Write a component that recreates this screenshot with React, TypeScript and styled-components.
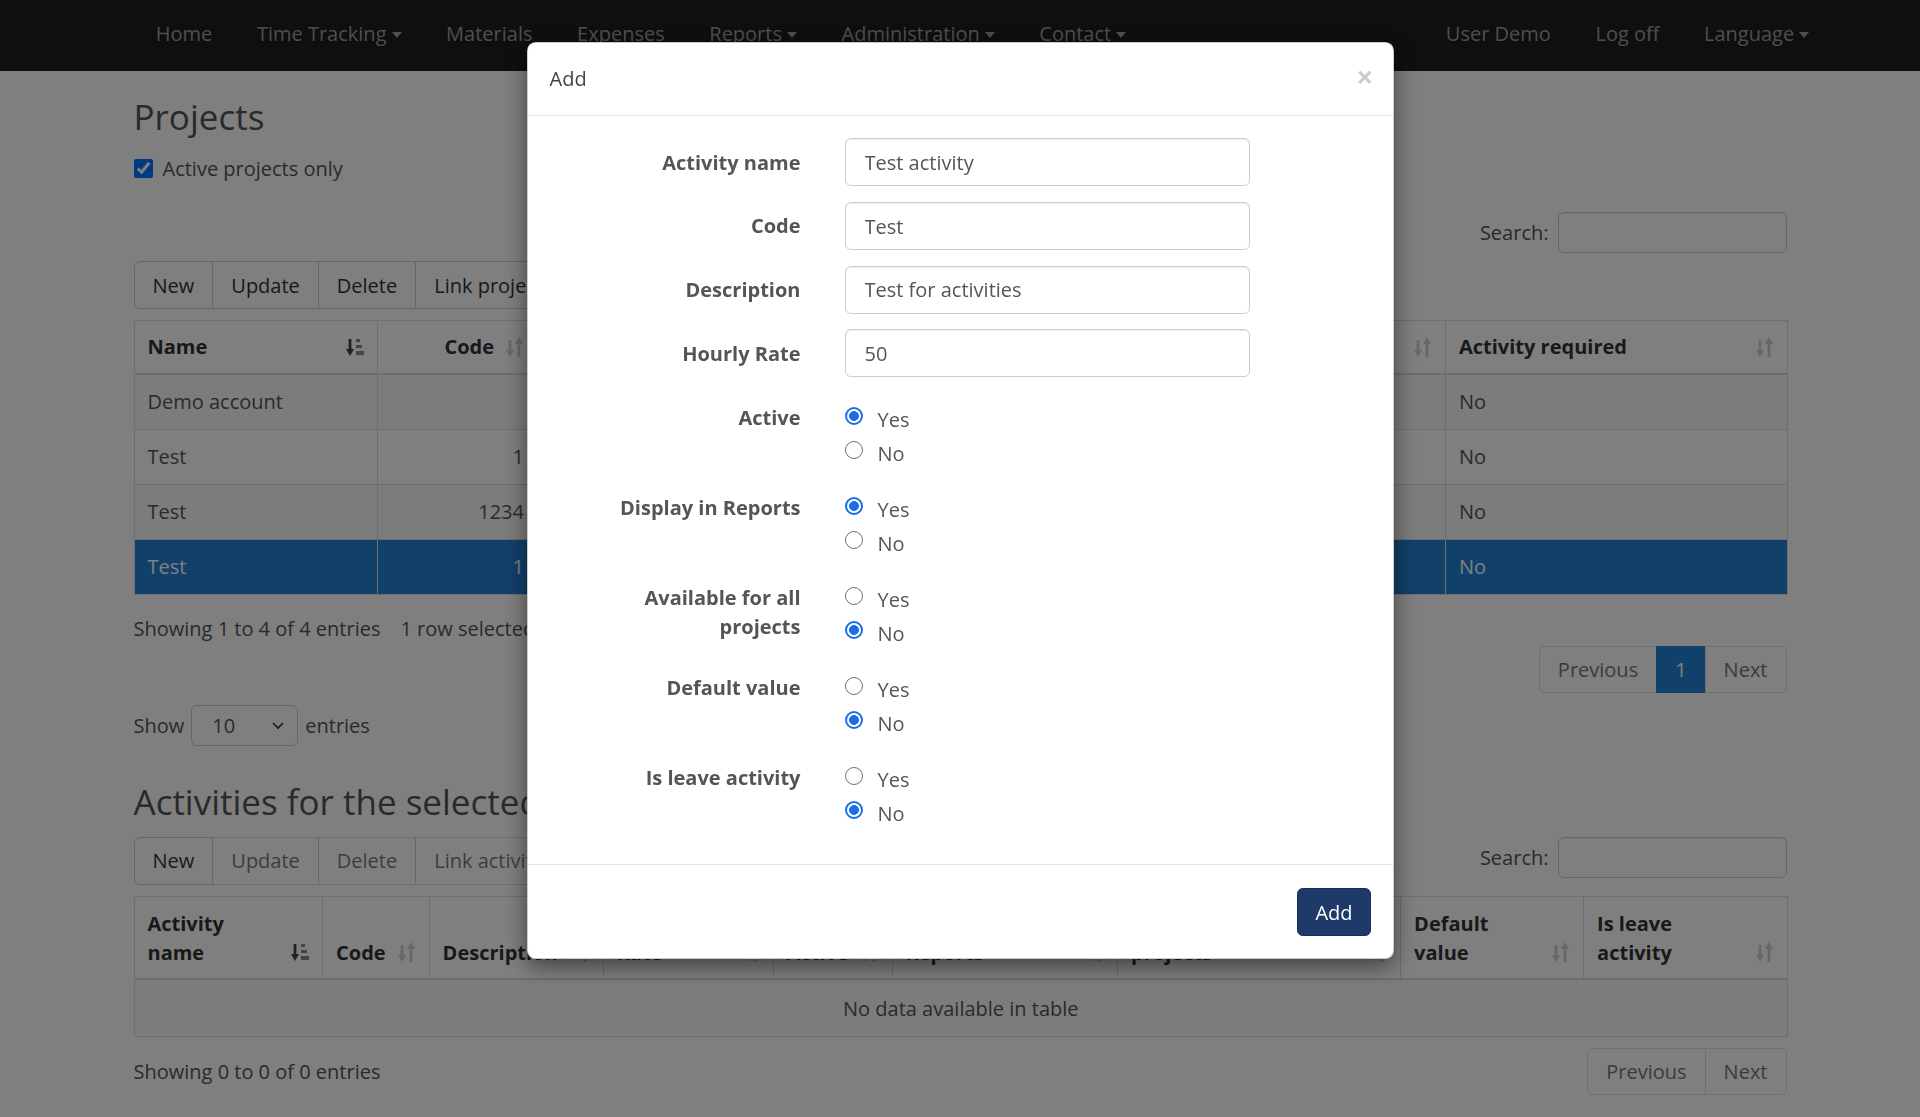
import React from 'react';
import styled, { createGlobalStyle } from 'styled-components';

// page behind the dialog is drawn in its normal colours, the backdrop dims it

const GlobalStyle = createGlobalStyle`
  * { box-sizing: border-box; }
  html, body { margin: 0; padding: 0; }
  body {
    height: 1117px;
    overflow: hidden;
    font-family: "Open Sans", "Liberation Sans", sans-serif;
    font-size: 20px;
    line-height: 29px;
    color: #555;
    background: #fff;
  }
`;

const Navbar = styled.nav`
  height: 71px;
  background: #1e1e1e;
`;

const NavInner = styled.div`
  width: 1653px;
  height: 100%;
  margin: 0 auto;
  display: flex;
  justify-content: space-between;
`;

const NavList = styled.ul<{ $right?: boolean }>`
  display: flex;
  margin: 0 ${({ $right }) => ($right ? '-45px' : '0')} 0 0;
  padding: 0;
  list-style: none;
`;

const NavItem = styled.li`
  display: flex;
  align-items: center;
  padding: 0 22.3px 5px;
  color: #9d9d9d;
  font-size: 20px;
  white-space: nowrap;
`;

const Caret = styled.span`
  display: inline-block;
  width: 0;
  height: 0;
  margin-left: 5px;
  margin-top: 3px;
  border-top: 6px solid #9d9d9d;
  border-left: 5px solid transparent;
  border-right: 5px solid transparent;
`;

const Content = styled.main`
  width: 1653px;
  margin: 0 auto;
`;

const Heading = styled.h3<{ $top: number }>`
  margin: ${({ $top }) => $top}px 0 0;
  font-size: 35px;
  line-height: 38.5px;
  font-weight: 500;
  color: #555;
`;

const CheckRow = styled.label`
  display: flex;
  align-items: center;
  gap: 10px;
  margin-top: 17px;
  height: 29px;
`;

const CheckBox = styled.input`
  width: 19px;
  height: 19px;
  margin: 0;
`;

const SearchRow = styled.div<{ $top?: number }>`
  display: flex;
  justify-content: flex-end;
  align-items: center;
  gap: 9px;
  margin-top: ${({ $top }) => $top ?? 0}px;
`;

const SearchInput = styled.input`
  width: 229px;
  height: 41px;
  border: 1px solid #ccc;
  border-radius: 5.8px;
  font: inherit;
  box-shadow: inset 0 1px 1px rgba(0, 0, 0, 0.075);
`;

const ToolRow = styled.div<{ $top: number }>`
  display: flex;
  justify-content: space-between;
  align-items: flex-start;
  margin-top: ${({ $top }) => $top}px;
`;

const BtnGroup = styled.div`
  display: inline-flex;
`;

const GroupBtn = styled.button<{ $off?: boolean }>`
  height: 48px;
  padding: 0 18px;
  margin-left: -1px;
  font: inherit;
  font-size: 20px;
  color: #333;
  background: #fff;
  border: 1px solid #ccc;
  opacity: ${({ $off }) => ($off ? 0.65 : 1)};
  white-space: nowrap;

  &:first-child {
    margin-left: 0;
    border-radius: 5.8px 0 0 5.8px;
  }
  &:last-child {
    border-radius: 0 5.8px 5.8px 0;
  }
`;

const Table = styled.table<{ $top: number }>`
  width: 100%;
  margin-top: ${({ $top }) => $top}px;
  border-collapse: collapse;
  table-layout: fixed;
  border: 1px solid #ddd;
`;

const Col = styled.col<{ $w: number }>`
  width: ${({ $w }) => $w}px;
`;

const Th = styled.th<{ $right?: boolean }>`
  position: relative;
  padding: 11.5px 43px 11.5px 13px;
  border: 1px solid #ddd;
  border-bottom-width: 2px;
  text-align: ${({ $right }) => ($right ? 'right' : 'left')};
  vertical-align: bottom;
  font-weight: 700;
  color: #333;
  line-height: 29px;
`;

const SortIcon = styled.span`
  position: absolute;
  right: 13px;
  bottom: 15px;
  display: flex;
  width: 19px;
  height: 22px;
`;

const Row = styled.tr<{ $odd?: boolean; $selected?: boolean }>`
  background: ${({ $odd, $selected }) => ($selected ? '#2282d4' : $odd ? '#f9f9f9' : '#fff')};
  color: ${({ $selected }) => ($selected ? '#fff' : '#555')};
`;

const Td = styled.td<{ $right?: boolean }>`
  padding: 12.5px 13px;
  border: 1px solid #ddd;
  text-align: ${({ $right }) => ($right ? 'right' : 'left')};
  white-space: nowrap;
  overflow: hidden;
`;

const EmptyCell = styled.td`
  padding: 13.5px 13px;
  border: 1px solid #ddd;
  text-align: center;
  background: #f9f9f9;
`;

const Info = styled.div<{ $top?: number }>`
  margin-top: ${({ $top }) => $top ?? 0}px;
`;

const Selected = styled.span`
  margin-left: 1em;
`;

const PagerRow = styled.div<{ $top: number }>`
  display: flex;
  justify-content: space-between;
  align-items: center;
  margin-top: ${({ $top }) => $top}px;
`;

const Pager = styled.ul`
  display: flex;
  margin: 0 0 0 auto;
  padding: 0;
  list-style: none;
`;

const PageBtn = styled.li<{ $active?: boolean }>`
  display: flex;
  align-items: center;
  height: 47px;
  padding: 0 18px;
  margin-left: -1px;
  border: 1px solid ${({ $active }) => ($active ? '#2282d4' : '#ddd')};
  background: ${({ $active }) => ($active ? '#2282d4' : '#fff')};
  color: ${({ $active }) => ($active ? '#fff' : '#777')};

  &:first-child {
    margin-left: 0;
    border-radius: 5.8px 0 0 5.8px;
  }
  &:last-child {
    border-radius: 0 5.8px 5.8px 0;
  }
`;

const LengthRow = styled.div`
  display: flex;
  align-items: center;
  gap: 7px;
  margin-top: 12px;
`;

const SelectBox = styled.div`
  display: flex;
  align-items: center;
  justify-content: space-between;
  width: 107px;
  height: 41px;
  padding: 0 12px 0 20px;
  border: 1px solid #ccc;
  border-radius: 5.8px;
  color: #555;
`;

/* dialog */

const Backdrop = styled.div`
  position: fixed;
  inset: 0;
  background: rgba(0, 0, 0, 0.5);
  z-index: 10;
`;

const Dialog = styled.div`
  position: fixed;
  top: 41.6px;
  left: 526.5px;
  width: 867px;
  background: #fff;
  border: 1px solid rgba(0, 0, 0, 0.2);
  border-radius: 8.7px;
  box-shadow: 0 7px 22px rgba(0, 0, 0, 0.5);
  z-index: 20;
`;

const DialogHeader = styled.div`
  display: flex;
  align-items: center;
  justify-content: space-between;
  height: 73px;
  padding: 0 22px;
  border-bottom: 1px solid #e5e5e5;
`;

const DialogTitle = styled.h4`
  margin: 0;
  font-size: 20px;
  font-weight: 400;
  color: #444;
`;

const Close = styled.span`
  margin: -4px -3px 0 0;
  font-size: 30px;
  font-weight: 700;
  line-height: 1;
  color: #000;
  opacity: 0.2;
`;

const DialogBody = styled.div`
  padding: 22.8px 22px 33.5px;
`;

const FormGroup = styled.div<{ $radio?: boolean }>`
  display: grid;
  grid-template-columns: 251px 405px;
  column-gap: 44px;
  align-items: ${({ $radio }) => ($radio ? 'start' : 'center')};
  margin-bottom: ${({ $radio }) => ($radio ? 22 : 15.7)}px;

  &:last-child {
    margin-bottom: 0;
  }
`;

const RadioSection = styled.div`
  padding-top: 9.8px;
`;

const Label = styled.label`
  padding-left: 21px;
  text-align: right;
  font-weight: 700;
  color: #555;
  line-height: 29.4px;
`;

const TextInput = styled.input`
  width: 405px;
  height: 48px;
  padding: 0 19px;
  border: 1px solid #ccc;
  border-radius: 5.8px;
  font: inherit;
  color: #555;
  box-shadow: inset 0 1px 1px rgba(0, 0, 0, 0.075);
`;

const RadioList = styled.div`
  display: flex;
  flex-direction: column;
`;

const RadioLine = styled.label`
  display: flex;
  align-items: center;
  height: 34px;
`;

const Radio = styled.input`
  appearance: none;
  flex-shrink: 0;
  width: 18px;
  height: 18px;
  margin: 0 15px 7px 0;
  border: 1.6px solid #6e6e6e;
  border-radius: 50%;
  background: #fff;

  &:checked {
    border: 2px solid #1a6fe8;
    background: radial-gradient(circle, #1a6fe8 0 4.6px, #fff 5.2px);
  }
`;

const DialogFooter = styled.div`
  display: flex;
  justify-content: flex-end;
  padding: 23px 22px 22px;
  border-top: 1px solid #e5e5e5;
`;

const PrimaryBtn = styled.button`
  height: 48px;
  padding: 0 17px;
  font: inherit;
  font-size: 20px;
  color: #fff;
  background: #1f3a68;
  border: 1px solid #182f56;
  border-radius: 5.8px;
`;

const SortBoth = () => (
  <SortIcon>
    <svg width="19" height="22" viewBox="0 0 19 22">
      <g fill="#cfcfcf">
        <rect x="3.6" y="4" width="2.8" height="12" />
        <polygon points="1,14 9,14 5,21" />
        <rect x="12.6" y="6" width="2.8" height="15" />
        <polygon points="10,8 18,8 14,1" />
      </g>
    </svg>
  </SortIcon>
);

const SortAsc = () => (
  <SortIcon>
    <svg width="19" height="22" viewBox="0 0 19 22">
      <rect x="3.6" y="3" width="2.8" height="12" fill="#444" />
      <polygon points="1,13 9,13 5,20" fill="#444" />
      <rect x="11" y="3" width="4" height="3" fill="#888" />
      <rect x="11" y="9" width="6" height="3" fill="#888" />
      <rect x="11" y="15" width="8" height="4" fill="#888" />
    </svg>
  </SortIcon>
);

const Chevron = () => (
  <svg width="14" height="9" viewBox="0 0 14 9">
    <polyline points="2,2 7,7 12,2" fill="none" stroke="#333" strokeWidth="1.6" />
  </svg>
);

const leftNav = [
  { name: 'Home' },
  { name: 'Time Tracking', menu: true },
  { name: 'Materials' },
  { name: 'Expenses' },
  { name: 'Reports', menu: true },
  { name: 'Administration', menu: true },
  { name: 'Contact', menu: true },
];

const rightNav = [{ name: 'User Demo' }, { name: 'Log off' }, { name: 'Language', menu: true }];

const projectCols = [
  { title: 'Name', w: 243.5, sorted: true },
  { title: 'Code', w: 160, right: true },
  { title: 'Description', w: 540 },
  { title: 'Customer', w: 368 },
  { title: 'Activity required', w: 342 },
];

const projects = [
  { name: 'Demo account', code: '' },
  { name: 'Test', code: '1' },
  { name: 'Test', code: '1234' },
  { name: 'Test', code: '1', selected: true },
];

const activityCols = [
  { title: 'Activity name', w: 188.5, sorted: true },
  { title: 'Code', w: 106.6 },
  { title: 'Description', w: 174 },
  { title: 'Hourly Rate', w: 170 },
  { title: 'Active', w: 119 },
  { title: 'Display in Reports', w: 225.5 },
  { title: 'Available for all projects', w: 283 },
  { title: 'Default value', w: 183 },
  { title: 'Is leave activity', w: 204 },
];

const fields = [
  { label: 'Activity name', value: 'Test activity' },
  { label: 'Code', value: 'Test' },
  { label: 'Description', value: 'Test for activities' },
  { label: 'Hourly Rate', value: '50' },
];

const choices = [
  { label: 'Active', value: 'Yes' },
  { label: 'Display in Reports', value: 'Yes' },
  { label: 'Available for all projects', value: 'No' },
  { label: 'Default value', value: 'No' },
  { label: 'Is leave activity', value: 'No' },
];

const App: React.FC = () => {
  return (
    <>
      <GlobalStyle />
      <Navbar>
        <NavInner>
          <NavList>
            {leftNav.map((item) => (
              <NavItem key={item.name}>
                {item.name}
                {item.menu && <Caret />}
              </NavItem>
            ))}
          </NavList>
          <NavList $right>
            {rightNav.map((item) => (
              <NavItem key={item.name}>
                {item.name}
                {item.menu && <Caret />}
              </NavItem>
            ))}
          </NavList>
        </NavInner>
      </Navbar>

      <Content>
        <Heading $top={27}>Projects</Heading>
        <CheckRow>
          <CheckBox type="checkbox" defaultChecked />
          Active projects only
        </CheckRow>

        <SearchRow $top={29}>
          Search:
          <SearchInput type="text" />
        </SearchRow>

        <ToolRow $top={8.7}>
          <BtnGroup>
            <GroupBtn>New</GroupBtn>
            <GroupBtn>Update</GroupBtn>
            <GroupBtn>Delete</GroupBtn>
            <GroupBtn>Link projects to activities</GroupBtn>
          </BtnGroup>
        </ToolRow>

        <Table $top={10.7}>
          <colgroup>
            {projectCols.map((c) => (
              <Col key={c.title} $w={c.w} />
            ))}
          </colgroup>
          <thead>
            <tr>
              {projectCols.map((c) => (
                <Th key={c.title} $right={c.right}>
                  {c.title}
                  {c.sorted ? <SortAsc /> : <SortBoth />}
                </Th>
              ))}
            </tr>
          </thead>
          <tbody>
            {projects.map((p, i) => (
              <Row key={i} $odd={i % 2 === 0} $selected={p.selected}>
                <Td>{p.name}</Td>
                <Td $right>{p.code}</Td>
                <Td></Td>
                <Td></Td>
                <Td>No</Td>
              </Row>
            ))}
          </tbody>
        </Table>

        <Info $top={19}>
          Showing 1 to 4 of 4 entries<Selected>1 row selected</Selected>
        </Info>
        <PagerRow $top={3}>
          <Pager>
            <PageBtn>Previous</PageBtn>
            <PageBtn $active>1</PageBtn>
            <PageBtn>Next</PageBtn>
          </Pager>
        </PagerRow>

        <LengthRow>
          Show
          <SelectBox>
            10
            <Chevron />
          </SelectBox>
          entries
        </LengthRow>

        <Heading $top={37}>Activities for the selected project</Heading>

        <ToolRow $top={15.2}>
          <BtnGroup>
            <GroupBtn>New</GroupBtn>
            <GroupBtn $off>Update</GroupBtn>
            <GroupBtn $off>Delete</GroupBtn>
            <GroupBtn $off>Link activities to projects</GroupBtn>
          </BtnGroup>
          <SearchRow>
            Search:
            <SearchInput type="text" />
          </SearchRow>
        </ToolRow>

        <Table $top={11.5}>
          <colgroup>
            {activityCols.map((c) => (
              <Col key={c.title} $w={c.w} />
            ))}
          </colgroup>
          <thead>
            <tr>
              {activityCols.map((c) => (
                <Th key={c.title}>
                  {c.title}
                  {c.sorted ? <SortAsc /> : <SortBoth />}
                </Th>
              ))}
            </tr>
          </thead>
          <tbody>
            <tr>
              <EmptyCell colSpan={9}>No data available in table</EmptyCell>
            </tr>
          </tbody>
        </Table>

        <PagerRow $top={11}>
          <Info>Showing 0 to 0 of 0 entries</Info>
          <Pager>
            <PageBtn>Previous</PageBtn>
            <PageBtn>Next</PageBtn>
          </Pager>
        </PagerRow>
      </Content>

      <Backdrop />
      <Dialog>
        <DialogHeader>
          <DialogTitle>Add</DialogTitle>
          <Close>×</Close>
        </DialogHeader>
        <DialogBody>
          {fields.map((f) => (
            <FormGroup key={f.label}>
              <Label>{f.label}</Label>
              <TextInput type="text" defaultValue={f.value} />
            </FormGroup>
          ))}
          <RadioSection>
            {choices.map((c) => (
              <FormGroup $radio key={c.label}>
                <Label>{c.label}</Label>
                <RadioList>
                  <RadioLine>
                    <Radio type="radio" name={c.label} defaultChecked={c.value === 'Yes'} />
                    Yes
                  </RadioLine>
                  <RadioLine>
                    <Radio type="radio" name={c.label} defaultChecked={c.value === 'No'} />
                    No
                  </RadioLine>
                </RadioList>
              </FormGroup>
            ))}
          </RadioSection>
        </DialogBody>
        <DialogFooter>
          <PrimaryBtn>Add</PrimaryBtn>
        </DialogFooter>
      </Dialog>
    </>
  );
};

export default App;
